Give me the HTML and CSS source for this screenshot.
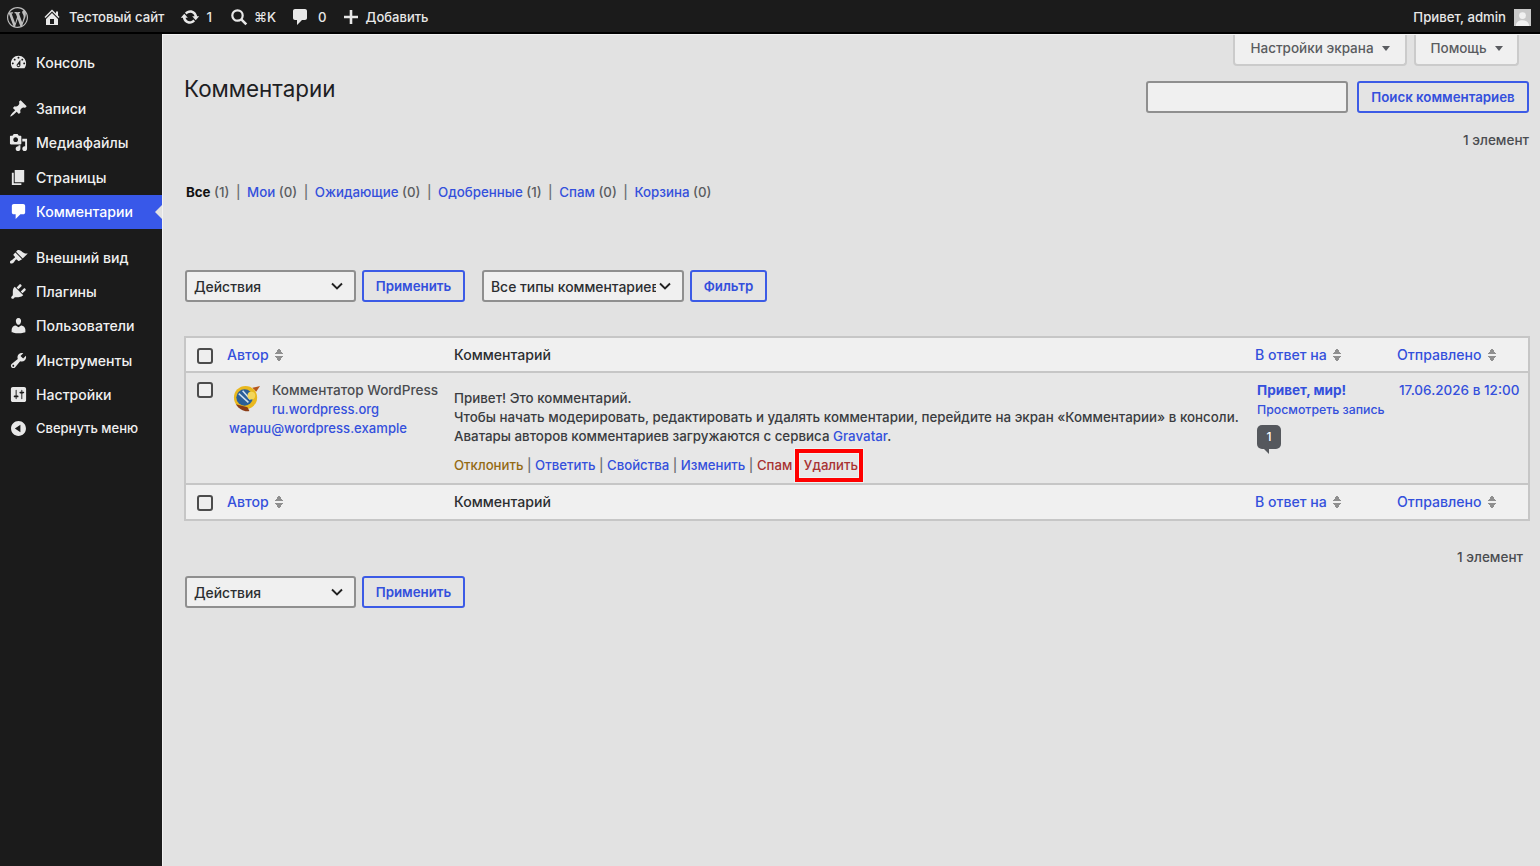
FILE: index.html
```html
<!DOCTYPE html>
<html lang="ru">

<head>
  <meta charset="UTF-8" />
  <meta name="viewport" content="width=device-width, initial-scale=1.0" />
  <title>Комментарии</title>
  <link rel="stylesheet" href="styles.css">
</head>

<body>
  <div class="adminbar">
    <svg class="wp-logo" viewBox="0 0 20 20"><path fill-rule="evenodd" d="M20 10c0-5.51-4.49-10-10-10C4.48 0 0 4.49 0 10c0 5.52 4.48 10 10 10 5.51 0 10-4.48 10-10zM7.78 15.37L4.37 6.22c.55-.02 1.17-.08 1.17-.08.5-.06.44-1.13-.06-1.11 0 0-1.45.11-2.37.11-.18 0-.37 0-.58-.01C4.12 2.69 6.87 1.11 10 1.11c2.33 0 4.45.87 6.05 2.34-.68-.11-1.65.39-1.65 1.58 0 .74.45 1.36.9 2.1.35.61.55 1.36.55 2.46 0 1.49-1.4 5-1.4 5l-3.03-8.37c.54-.02.82-.17.82-.17.5-.05.44-1.25-.06-1.22 0 0-1.44.12-2.38.12-.87 0-2.33-.12-2.33-.12-.5-.03-.56 1.2-.06 1.22l.92.08 1.26 3.41zM17.41 10c.24-.64.74-1.87.43-4.25.7 1.29 1.05 2.71 1.05 4.25 0 3.29-1.73 6.24-4.4 7.78.97-2.59 1.94-5.2 2.92-7.78zM6.1 18.09C3.12 16.65 1.11 13.53 1.11 10c0-1.3.23-2.48.72-3.59C3.25 10.3 4.67 14.2 6.1 18.09zm4.03-6.63l2.58 6.98c-.86.29-1.76.45-2.71.45-.79 0-1.57-.11-2.29-.33.81-2.38 1.62-4.74 2.42-7.1z"/></svg>
    <div class="bar-item site">
      <svg class="bar-icon" viewBox="0 0 20 20"><path d="M16 8.5l1.53 1.53-1.06 1.06L10 4.62l-6.47 6.47-1.06-1.06L10 2.5l4 4v-2h2v4zm-6-2.46l6 5.99V18H4v-5.97zM12 17v-5H8v5h4z"/></svg>
      <span>Тестовый сайт</span>
    </div>
    <div class="bar-item updates">
      <svg class="bar-icon" viewBox="0 0 20 20"><path d="M10.2 3.28c3.53 0 6.43 2.61 6.92 6h2.08l-3.5 4-3.5-4h2.32c-.45-1.97-2.21-3.45-4.32-3.45-1.45 0-2.73.71-3.54 1.78L4.95 5.66C6.23 4.2 8.11 3.28 10.2 3.28zm-.4 13.44c-3.52 0-6.43-2.61-6.92-6H.8l3.5-4c1.17 1.33 2.33 2.67 3.5 4H5.48c.45 1.97 2.21 3.45 4.32 3.45 1.45 0 2.73-.71 3.54-1.78l1.71 1.95c-1.28 1.46-3.15 2.38-5.25 2.38z"/></svg>
      <span>1</span>
    </div>
    <div class="bar-item search">
      <svg class="bar-icon" viewBox="0 0 20 20"><circle cx="8.5" cy="8.5" r="5.2" fill="none" stroke="currentColor" stroke-width="2.2"/><path d="M12.3 12.3l5 5" fill="none" stroke="currentColor" stroke-width="2.6"/></svg>
      <span>⌘K</span>
    </div>
    <div class="bar-item comments">
      <svg class="bar-icon" viewBox="0 0 20 20"><path d="M5 2h10c1.1 0 2 .9 2 2v7c0 1.1-.9 2-2 2h-3l-5 5v-5H5c-1.1 0-2-.9-2-2V4c0-1.1.9-2 2-2z"/></svg>
      <span>0</span>
    </div>
    <div class="bar-item add">
      <svg class="bar-icon" viewBox="0 0 20 20"><path d="M17 8.7v2.6h-5.7V17H8.7v-5.7H3V8.7h5.7V3h2.6v5.7H17z"/></svg>
      <span>Добавить</span>
    </div>
    <div class="bar-user">
      <span>Привет, admin</span>
      <svg class="user-pic" viewBox="0 0 18 18"><rect width="18" height="18" fill="#c9c9c9"/><circle cx="9" cy="7" r="3.6" fill="#f1f1f1"/><path d="M2 18c0-4 3-6 7-6s7 2 7 6z" fill="#f1f1f1"/></svg>
    </div>
  </div>

  <div class="layout">
    <nav class="sidemenu">
      <ul class="menu">
        <li>
          <svg viewBox="0 0 20 20"><path fill-rule="evenodd" d="M3.76 16h12.48c1.1-1.37 1.76-3.11 1.76-5 0-4.42-3.58-8-8-8s-8 3.58-8 8c0 1.89.66 3.63 1.76 5zM10 4c.55 0 1 .45 1 1s-.45 1-1 1-1-.45-1-1 .45-1 1-1zM6 6c.55 0 1 .45 1 1s-.45 1-1 1-1-.45-1-1 .45-1 1-1zm8 0c.55 0 1 .45 1 1s-.45 1-1 1-1-.45-1-1 .45-1 1-1zm-5.37 5.55L12 7v6c0 1.1-.9 2-2 2s-2-.9-2-2c0-.57.24-1.08.63-1.45zM4 10c.55 0 1 .45 1 1s-.45 1-1 1-1-.45-1-1 .45-1 1-1zm12 0c.55 0 1 .45 1 1s-.45 1-1 1-1-.45-1-1 .45-1 1-1zm-5 3c0-.55-.45-1-1-1s-1 .45-1 1 .45 1 1 1 1-.45 1-1z"/></svg>
          Консоль
        </li>
      </ul>
      <ul class="menu">
        <li>
          <svg viewBox="0 0 20 20"><path d="M10.44 3.02l1.82-1.82 6.36 6.35-1.83 1.82c-1.05-.68-2.48-.57-3.41.36l-.75.75c-.92.93-1.04 2.35-.35 3.41l-1.83 1.82-2.41-2.41-2.8 2.79c-.42.42-3.38 2.71-3.8 2.29s1.86-3.39 2.28-3.81l2.79-2.79L4.1 9.36l1.83-1.82c1.05.69 2.48.57 3.4-.36l.75-.75c.93-.92 1.05-2.35.36-3.41z"/></svg>
          Записи
        </li>
        <li>
          <svg viewBox="0 0 20 20"><path fill-rule="evenodd" d="M13 11V4c0-.55-.45-1-1-1h-1.67L9 1H5L3.67 3H2c-.55 0-1 .45-1 1v7c0 .55.45 1 1 1h10c.55 0 1-.45 1-1zM7 4.5c1.38 0 2.5 1.12 2.5 2.5S8.38 9.5 7 9.5 4.5 8.38 4.5 7 5.62 4.5 7 4.5zM14 6h5v10.5c0 1.38-1.12 2.5-2.5 2.5S14 17.88 14 16.5s1.12-2.5 2.5-2.5c.17 0 .34.02.5.05V9h-3V6zm-4 8.05V13h2v3.5c0 1.38-1.12 2.5-2.5 2.5S7 17.88 7 16.5 8.12 14 9.5 14c.17 0 .34.02.5.05z"/></svg>
          Медиафайлы
        </li>
        <li>
          <svg viewBox="0 0 20 20"><path d="M6 15V2h10v13H6zm-1 1h8v2H3V5h2v11z"/></svg>
          Страницы
        </li>
        <li class="current">
          <svg viewBox="0 0 20 20"><path d="M5 2h10c1.1 0 2 .9 2 2v7c0 1.1-.9 2-2 2h-3l-5 5v-5H5c-1.1 0-2-.9-2-2V4c0-1.1.9-2 2-2z"/></svg>
          Комментарии
        </li>
      </ul>
      <ul class="menu">
        <li>
          <svg viewBox="0 0 20 20"><path d="M14.48 11.06L7.41 3.99l1.5-1.5c.5-.56 2.3-.47 3.51.32 1.21.8 1.43 1.28 2.91 2.1 1.18.64 2.45 1.26 4.45.85zm-.71.71L6.7 4.7 4.93 6.47c-.39.39-.39 1.02 0 1.41l1.06 1.06c.39.39.39 1.03 0 1.42-.6.6-1.43 1.11-2.21 1.69-.35.26-.7.53-1.01.84C1.43 13.23.4 14.98 1.43 16s2.78-.01 3.12-.35c.31-.31.58-.66.84-1.01.58-.78 1.09-1.61 1.69-2.21.39-.39 1.03-.39 1.42 0l1.06 1.06c.39.39 1.02.39 1.41 0z"/></svg>
          Внешний вид
        </li>
        <li>
          <svg viewBox="0 0 20 20"><path d="M13.11 4.36L9.87 7.6 8 5.73l3.24-3.24c.35-.34 1.05-.2 1.56.32.52.51.66 1.21.31 1.55zm-8 1.77l.91-1.12 9.01 9.01-1.19.84c-.71.71-2.63 1.16-3.82 1.16H6.14L4.9 17.26c-.59.59-1.54.59-2.12 0-.59-.58-.59-1.53 0-2.12l1.24-1.24v-3.88c0-1.13.4-3.19 1.09-3.89zm7.26 3.97l3.24-3.24c.34-.35 1.04-.21 1.55.31.52.51.66 1.21.31 1.55l-3.24 3.25z"/></svg>
          Плагины
        </li>
        <li>
          <svg viewBox="0 0 20 20"><path d="M10 9.25c-2.27 0-2.73-3.44-2.73-3.44C7 4.02 7.82 2 9.97 2c2.16 0 2.98 2.02 2.71 3.81 0 0-.41 3.44-2.68 3.44zm0 2.57L12.72 10c2.39 0 4.52 2.33 4.52 4.53v2.49s-3.65 1.13-7.24 1.13c-3.65 0-7.24-1.13-7.24-1.13v-2.49c0-2.25 1.94-4.48 4.47-4.48z"/></svg>
          Пользователи
        </li>
        <li>
          <svg viewBox="0 0 20 20"><path fill-rule="evenodd" d="M16.68 9.77c-1.34 1.34-3.3 1.67-4.95.99l-5.41 6.52c-.99.99-2.59.99-3.58 0s-.99-2.59 0-3.57l6.52-5.42c-.68-1.65-.35-3.61.99-4.95 1.28-1.28 3.12-1.62 4.72-1.06l-2.89 2.89 2.82 2.82 2.86-2.87c.53 1.58.18 3.39-1.08 4.65zM3.81 16.21c.4.39 1.04.39 1.43 0 .4-.4.4-1.04 0-1.43-.39-.4-1.03-.4-1.43 0-.39.39-.39 1.03 0 1.43z"/></svg>
          Инструменты
        </li>
        <li>
          <svg viewBox="0 0 20 20"><path fill-rule="evenodd" d="M18 16V4c0-1.1-.9-2-2-2H4c-1.1 0-2 .9-2 2v12c0 1.1.9 2 2 2h12c1.1 0 2-.9 2-2zM8 11h1c.55 0 1 .45 1 1s-.45 1-1 1H8v1.5c0 .28-.22.5-.5.5s-.5-.22-.5-.5V13H6c-.55 0-1-.45-1-1s.45-1 1-1h1V5.5c0-.28.22-.5.5-.5s.5.22.5.5V11zm5-2h-1c-.55 0-1-.45-1-1s.45-1 1-1h1V5.5c0-.28.22-.5.5-.5s.5.22.5.5V7h1c.55 0 1 .45 1 1s-.45 1-1 1h-1v5.5c0 .28-.22.5-.5.5s-.5-.22-.5-.5V9z"/></svg>
          Настройки
        </li>
        <li class="collapse">
          <svg viewBox="0 0 20 20"><path fill-rule="evenodd" d="M10 2.16c4.33 0 7.84 3.51 7.84 7.84s-3.51 7.84-7.84 7.84S2.16 14.33 2.16 10 5.71 2.16 10 2.16zm2 11.72V6.12L6.18 9.97z"/></svg>
          Свернуть меню
        </li>
      </ul>
    </nav>

    <main class="content">
      <div class="screen-meta">
        <div class="meta-tab meta-screen">Настройки экрана <i class="tri"></i></div>
        <div class="meta-tab meta-help">Помощь <i class="tri"></i></div>
      </div>

      <div class="page-head">
        <h1>Комментарии</h1>
        <div class="search-box">
          <input type="text" class="search-input" />
          <button class="btn btn-search">Поиск комментариев</button>
        </div>
      </div>

      <p class="count">1 элемент</p>

      <ul class="subsubsub">
        <li><b>Все</b> <span>(1)</span></li>
        <li><a href="#">Мои</a> <span>(0)</span></li>
        <li><a href="#">Ожидающие</a> <span>(0)</span></li>
        <li><a href="#">Одобренные</a> <span>(1)</span></li>
        <li><a href="#">Спам</a> <span>(0)</span></li>
        <li><a href="#">Корзина</a> <span>(0)</span></li>
      </ul>

      <div class="toolbar toolbar-top">
        <select class="sel sel-actions"><option>Действия</option></select>
        <button class="btn btn-apply">Применить</button>
        <select class="sel sel-types"><option>Все типы комментариев</option></select>
        <button class="btn btn-filter">Фильтр</button>
      </div>

      <table class="comments-table">
        <colgroup>
          <col class="col-cb" />
          <col class="col-author" />
          <col class="col-comment" />
          <col class="col-response" />
          <col class="col-date" />
        </colgroup>
        <thead>
          <tr>
            <th><input type="checkbox" class="check" /></th>
            <th><a href="#">Автор</a><i class="sort"></i></th>
            <th>Комментарий</th>
            <th><a href="#">В ответ на</a><i class="sort"></i></th>
            <th><a href="#">Отправлено</a><i class="sort"></i></th>
          </tr>
        </thead>
        <tbody>
          <tr>
            <td class="cell-cb"><input type="checkbox" class="check" /></td>
            <td class="cell-author">
              <div class="author-name">
                <svg class="wapuu" viewBox="0 0 30 32">
                  <path d="M21 5l8-2-4 6z" fill="#b5561c"/>
                  <circle cx="14" cy="15" r="12" fill="#e9b81e"/>
                  <circle cx="13" cy="15" r="8.5" fill="#2a5f98"/>
                  <path d="M7 11l10 9M11 8l8 9" stroke="#cfe0ee" stroke-width="1.6"/>
                  <circle cx="20" cy="13" r="4" fill="#f3d65a"/>
                  <path d="M4 22c4 6 9 8 14 7l-2-4z" fill="#8b3d16"/>
                </svg>
                <div>
                  <div class="name-text">Комментатор WordPress</div>
                  <a href="#" class="author-url">ru.wordpress.org</a>
                </div>
              </div>
              <a href="#" class="author-mail">wapuu@wordpress.example</a>
            </td>
            <td class="cell-comment">
              <p>Привет! Это комментарий.<br />Чтобы начать модерировать, редактировать и удалять комментарии, перейдите на экран «Комментарии» в консоли.<br />Аватары авторов комментариев загружаются с сервиса <a href="#">Gravatar</a>.</p>
              <div class="row-actions">
                <a href="#" class="act-unapprove">Отклонить</a> |
                <a href="#">Ответить</a> |
                <a href="#">Свойства</a> |
                <a href="#">Изменить</a> |
                <a href="#" class="act-red">Спам</a>
                <a href="#" class="act-red act-delete">Удалить</a>
              </div>
            </td>
            <td class="cell-response">
              <a href="#" class="post-title">Привет, мир!</a>
              <a href="#" class="post-view">Просмотреть запись</a>
              <span class="bubble">1</span>
            </td>
            <td class="cell-date"><a href="#">17.06.2026 в 12:00</a></td>
          </tr>
        </tbody>
        <tfoot>
          <tr>
            <th><input type="checkbox" class="check" /></th>
            <th><a href="#">Автор</a><i class="sort"></i></th>
            <th>Комментарий</th>
            <th><a href="#">В ответ на</a><i class="sort"></i></th>
            <th><a href="#">Отправлено</a><i class="sort"></i></th>
          </tr>
        </tfoot>
      </table>

      <p class="count count-bottom">1 элемент</p>

      <div class="toolbar toolbar-bottom">
        <select class="sel sel-actions"><option>Действия</option></select>
        <button class="btn btn-apply">Применить</button>
      </div>
    </main>
  </div>
</body>

</html>
```

FILE: styles.css
```css
* {
  box-sizing: border-box;
}

html,
body {
  margin: 0;
  height: 866px;
  overflow: hidden;
}

body {
  font-family: Inter, "Liberation Sans", "Noto Sans CJK SC", sans-serif;
  font-size: 13.35px;
  line-height: 19px;
  color: #3a3c40;
  background: #e2e2e2;
}

a {
  color: #3450dc;
  text-decoration: none;
}

/* верхняя панель */
.adminbar {
  height: 34px;
  padding-top: 2px;
  background: #1b1b1b;
  border-bottom: 2px solid #000;
  color: #e8e8e8;
  display: flex;
  align-items: center;
  font-weight: 500;
  font-size: 13.2px;
}

.wp-logo {
  width: 21px;
  height: 21px;
  margin-left: 7px;
  fill: #bdbdbd;
}

.bar-item {
  display: flex;
  align-items: center;
}

.bar-icon {
  width: 20px;
  height: 20px;
  fill: currentColor;
}

.site {
  margin-left: 14px;
  gap: 7px;
}

.updates {
  margin-left: 16px;
  gap: 6px;
}

.search {
  margin-left: 17px;
  gap: 5px;
}

.comments {
  margin-left: 14px;
  gap: 8px;
}

.add {
  margin-left: 14px;
  gap: 5px;
}

.add span {
  font-size: 13px;
}

.bar-user {
  margin-left: auto;
  margin-right: 9px;
  display: flex;
  align-items: center;
  gap: 8px;
}

.user-pic {
  width: 17px;
  height: 17px;
}

.layout {
  display: flex;
  height: 832px;
}

/* боковое меню */
.sidemenu {
  width: 162px;
  flex: none;
  background: #1b1b1b;
  padding-top: 11px;
  color: #f0f0f0;
  font-weight: 500;
  font-size: 14.1px;
}

.menu {
  margin: 0 0 11px;
  padding: 0;
  list-style: none;
}

.menu:first-child {
  margin-bottom: 12px;
}

.menu li {
  height: 34.4px;
  padding-left: 9px;
  display: flex;
  align-items: center;
  gap: 8px;
  position: relative;
}

.menu svg {
  width: 19px;
  height: 19px;
  flex: none;
  fill: #e8e8e8;
}

.menu .current {
  background: #3858e9;
  color: #fff;
}

.menu .current svg {
  fill: #fff;
}

.menu .current::after {
  content: "";
  position: absolute;
  right: 0;
  top: 10px;
  border: 7px solid transparent;
  border-right-color: #e2e2e2;
  border-left-width: 0;
}

.menu .collapse {
  height: 34px;
  font-size: 13px;
}

/* контент */
.content {
  flex: 1;
  min-width: 0;
  padding: 0 11px 0 21px;
  border-left: 1px solid #f2f2f2;
  border-top: 1px solid #f2f2f2;
}

.screen-meta {
  display: flex;
  justify-content: flex-end;
  gap: 7px;
  margin-right: 10px;
  height: 31px;
}

.meta-tab {
  height: 31px;
  padding-bottom: 2px;
  background: #f0f0f0;
  border: 2px solid #cbcbcb;
  border-top: none;
  border-radius: 0 0 4px 4px;
  color: #5a5c60;
  font-weight: 500;
  font-size: 13.5px;
  display: flex;
  align-items: center;
  justify-content: center;
  gap: 8px;
}

.meta-screen {
  width: 174px;
}

.meta-help {
  width: 105px;
}

.tri {
  border: 4px solid transparent;
  border-top: 5px solid #5a5c60;
  border-bottom: none;
}

.page-head {
  display: flex;
  justify-content: space-between;
  margin-top: 15px;
}

h1 {
  margin: -8px 0 0;
  font-size: 22.4px;
  line-height: 32px;
  font-weight: 400;
  color: #1d2023;
}

.search-box {
  display: flex;
  gap: 9px;
}

.search-input {
  width: 202px;
  height: 32px;
  background: #f0f0f0;
  border: 2px solid #8f8f8f;
  border-radius: 3px;
}

.btn {
  height: 32px;
  padding: 0;
  background: #e4e4e4;
  border: 2px solid #3c5be6;
  border-radius: 3px;
  color: #3450dc;
  font-family: inherit;
  font-size: 13.3px;
  font-weight: 600;
  box-shadow: 0 0 1px #fff6d8;
}

.btn-search {
  width: 172px;
}

.count {
  margin: 18px 0 0;
  text-align: right;
  font-weight: 500;
  font-size: 13.5px;
  color: #4a4c50;
}

.subsubsub {
  margin: 33px 0 0 2px;
  padding: 0;
  list-style: none;
  display: flex;
  font-weight: 500;
  font-size: 13.3px;
  color: #5a5c60;
}

.subsubsub li + li::before {
  content: "|";
  margin: 0 6.5px;
  color: #6d6f73;
}

.subsubsub b {
  color: #111;
  font-weight: 700;
}

.toolbar {
  display: flex;
  align-items: center;
  margin-left: 1px;
}

.toolbar-top {
  margin-top: 68px;
}

.sel {
  height: 32px;
  padding: 1px 26px 0 7px;
  appearance: none;
  background: #f0f0f0 url("data:image/svg+xml,%3Csvg xmlns='http://www.w3.org/2000/svg' viewBox='0 0 12 8'%3E%3Cpath d='M1 1.5l5 5 5-5' fill='none' stroke='%23222' stroke-width='1.9'/%3E%3C/svg%3E") no-repeat right 11px center / 12px 8px;
  border: 2px solid #8f8f8f;
  border-radius: 3px;
  font-family: inherit;
  font-size: 13.9px;
  font-weight: 500;
  color: #2c2e31;
}

.sel-actions {
  width: 171px;
}

.sel-types {
  width: 202px;
  margin-left: 17px;
}

.btn-apply {
  width: 103px;
  margin-left: 6px;
}

.btn-filter {
  width: 77px;
  margin-left: 6px;
}

/* таблица */
.comments-table {
  width: 1346px;
  margin-top: 34px;
  border-collapse: separate;
  border-spacing: 0;
  table-layout: fixed;
  border: 2px solid #c6c6c6;
  font-weight: 500;
}

.col-cb {
  width: 33px;
}

.col-author {
  width: 227px;
}

.col-comment {
  width: 801px;
}

.col-response {
  width: 142px;
}

.comments-table th {
  height: 35px;
  padding: 0 0 0 8px;
  background: #f0f0f0;
  text-align: left;
  font-weight: 500;
  font-size: 14.1px;
  color: #2c2e31;
}

.comments-table th:first-child {
  padding: 2px 0 0 11px;
}

.comments-table thead th {
  border-bottom: 2px solid #c6c6c6;
}

.comments-table tfoot th {
  height: 36px;
  padding-bottom: 1px;
  border-top: 2px solid #c6c6c6;
}

.sort {
  display: inline-block;
  width: 8px;
  height: 14px;
  margin-left: 6px;
  vertical-align: -2px;
  background:
    linear-gradient(to bottom right, transparent 50%, #8f8f8f 50%) 0 0 / 4px 6px no-repeat,
    linear-gradient(to bottom left, transparent 50%, #8f8f8f 50%) 4px 0 / 4px 6px no-repeat,
    linear-gradient(to top right, transparent 50%, #8f8f8f 50%) 0 8px / 4px 6px no-repeat,
    linear-gradient(to top left, transparent 50%, #8f8f8f 50%) 4px 8px / 4px 6px no-repeat;
}

.check {
  width: 16px;
  height: 16px;
  margin: 0;
  display: block;
  appearance: none;
  background: #eee;
  border: 2px solid #4c4c4c;
  border-radius: 3px;
}

.comments-table td {
  height: 110px;
  vertical-align: top;
  background: #e7e7e7;
}

.cell-cb {
  padding: 9px 0 0 11px;
}

.cell-author {
  padding: 8px 0 0 10px;
}

.author-name {
  display: flex;
  align-items: flex-start;
}

.wapuu {
  width: 29px;
  height: 31px;
  margin: 2px 11px 0 3px;
  flex: none;
}

.name-text {
  color: #4a4c50;
  font-size: 13.6px;
  white-space: nowrap;
}

.author-url {
  font-size: 13px;
}

.author-mail {
  font-size: 13.1px;
}

.cell-comment {
  padding: 16px 8px 0 8px;
  color: #3a3c40;
}

.cell-comment p {
  margin: 0;
  white-space: nowrap;
}

.row-actions {
  margin-top: 10px;
  font-size: 13.2px;
  white-space: nowrap;
  color: #6d6f73;
}

.act-unapprove {
  color: #946a14;
}

.act-red {
  color: #a83232;
}

.act-delete {
  position: relative;
  margin-left: 8px;
}

.act-delete::after {
  content: "";
  position: absolute;
  left: -9px;
  right: -5px;
  top: -8px;
  bottom: -9px;
  border: 4px solid #f00;
  box-shadow: 0 0 0 1px #eef2f2, inset 0 0 0 1px #eef2f2;
}

.cell-response {
  padding: 8px 0 0 10px;
}

.cell-response a {
  display: block;
  white-space: nowrap;
}

.post-title {
  font-size: 13.6px;
  font-weight: 700;
}

.post-view {
  font-size: 12.3px;
}

.bubble {
  display: block;
  width: 24px;
  height: 24px;
  margin-top: 6px;
  background: #55585d;
  border-radius: 5px;
  color: #fff;
  font-size: 12px;
  line-height: 24px;
  text-align: center;
  position: relative;
}

.bubble::after {
  content: "";
  position: absolute;
  left: 7px;
  bottom: -5px;
  border-top: 5px solid #55585d;
  border-left: 5px solid transparent;
}

.cell-date {
  padding: 8px 0 0 10px;
  font-size: 13.5px;
  white-space: nowrap;
}

.count-bottom {
  margin-top: 27px;
  margin-right: 6px;
}

.toolbar-bottom {
  margin-top: 9px;
}
```
